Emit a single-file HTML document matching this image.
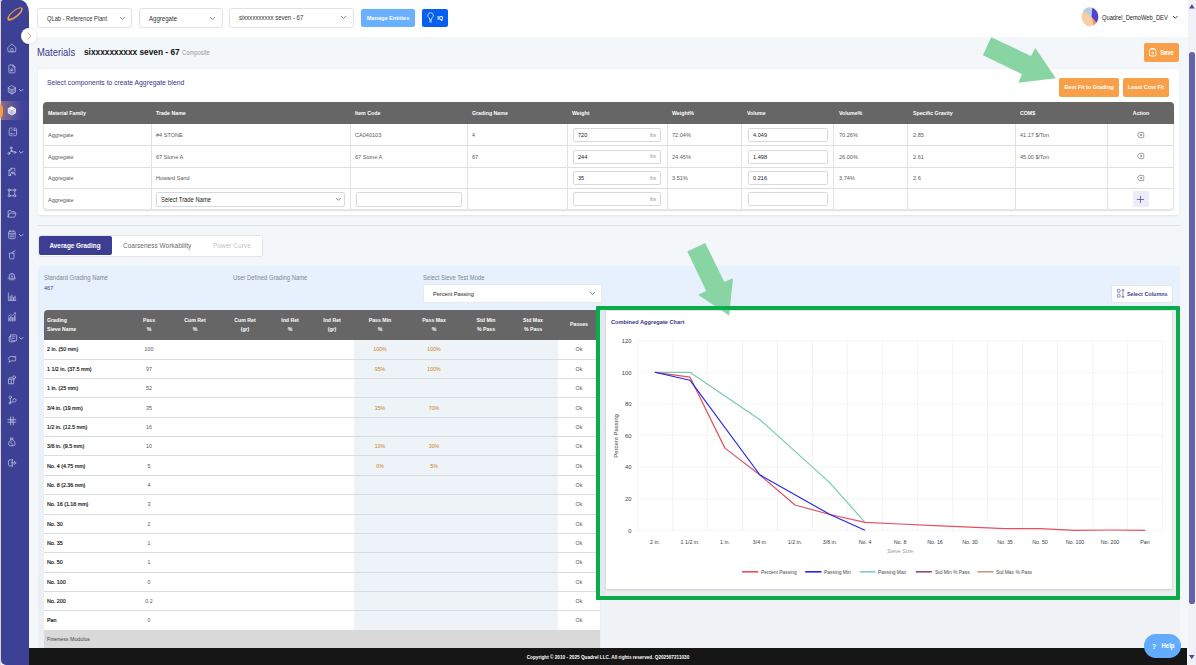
<!DOCTYPE html>
<html lang="en"><head><meta charset="utf-8"><title>Materials - Aggregate blend</title>
<style>
*{box-sizing:border-box;margin:0;padding:0}
html,body{width:1196px;height:665px;overflow:hidden}
body{position:relative;background:#f4f7fa;font-family:"Liberation Sans",sans-serif;color:#555;font-size:5.6px;line-height:1}
.abs{position:absolute}
.t{position:absolute;white-space:nowrap;line-height:1;transform:translateY(calc(-50% + 1px))}
.tc{position:absolute;white-space:nowrap;line-height:1;transform:translate(-50%,calc(-50% + 1px));text-align:center}
.b{font-weight:bold}
.sidebar{position:absolute;left:1px;top:0;width:27.5px;height:665px;background:#3d4196;border-radius:2px 9px 0 5px/2px 13px 0 5px}
.topbar{position:absolute;left:28.5px;top:0;width:1159.5px;height:37px;background:#fff}
.sel{position:absolute;background:#fff;border:0.7px solid #dfe2e7;border-radius:2.5px}
.btn{position:absolute;border-radius:2px;color:#fff;font-weight:bold}
.card{position:absolute;background:#fff;border-radius:2px;box-shadow:0 0.5px 2px rgba(60,70,90,.10)}
.th{position:absolute;background:#666;}
.hl{position:absolute;height:0.7px;background:#dcdfe4}
.vl{position:absolute;width:0.7px;background:#e0e3e8}
.inp{position:absolute;background:#fff;border:0.7px solid #d6dae0;border-radius:2px}
svg{position:absolute;overflow:visible}
</style></head>
<body>
<div class="topbar"></div>
<div class="sel" style="left:36.8px;top:8px;width:95.7px;height:19.5px"></div>
<div class="t" style="left:46.9px;top:17.7px;font-size:6.3px;color:#333;transform-origin:0 50%;transform:translateY(calc(-50% + 1px)) scaleX(0.9091);">QLab - Reference Plant</div>
<svg style="left:119.5px;top:16.65px" width="5.0" height="3.5" viewBox="0 0 5.0 3.5"><path d="M0.3 0.3 L2.5 2.5 L4.7 0.3" fill="none" stroke="#7c7c98" stroke-width="0.85" stroke-linecap="round" stroke-linejoin="round"/></svg>
<div class="sel" style="left:139px;top:8px;width:83.5px;height:19.5px"></div>
<div class="t" style="left:148.7px;top:17.7px;font-size:6.7px;color:#333;transform-origin:0 50%;transform:translateY(calc(-50% + 1px)) scaleX(0.9091);">Aggregate</div>
<svg style="left:209.7px;top:16.65px" width="5.0" height="3.5" viewBox="0 0 5.0 3.5"><path d="M0.3 0.3 L2.5 2.5 L4.7 0.3" fill="none" stroke="#7c7c98" stroke-width="0.85" stroke-linecap="round" stroke-linejoin="round"/></svg>
<div class="sel" style="left:229px;top:8px;width:124.5px;height:19.5px"></div>
<div class="t" style="left:239.2px;top:16.8px;font-size:6.63px;color:#333;transform-origin:0 50%;transform:translateY(calc(-50% + 1px)) scaleX(0.9091);">sixxxxxxxxxx seven - 67</div>
<svg style="left:341.3px;top:16.45px" width="5.0" height="3.5" viewBox="0 0 5.0 3.5"><path d="M0.3 0.3 L2.5 2.5 L4.7 0.3" fill="none" stroke="#7c7c98" stroke-width="0.85" stroke-linecap="round" stroke-linejoin="round"/></svg>
<div class="btn" style="left:360.9px;top:8.5px;width:53.8px;height:18.6px;background:#6ab0fe"></div>
<div class="tc b" style="left:388px;top:17.4px;font-size:6.16px;color:#fff;transform:translate(-50%,calc(-50% + 1px)) scaleX(0.9091);">Manage Entities</div>
<div class="btn" style="left:421.5px;top:8.5px;width:26.7px;height:18.6px;background:#0560f0"></div>
<svg style="left:426.8px;top:12.2px" width="7.2" height="11" viewBox="0 0 6 9.2"><path d="M3 0.6a2.3 2.3 0 0 0-1.3 4.2c.3.3.5.7.5 1.1v.5h1.6v-.5c0-.4.2-.8.5-1.1A2.3 2.3 0 0 0 3 .6z" fill="none" stroke="#fff" stroke-width="0.6"/><path d="M2.2 7.4h1.6M2.4 8.4h1.2" stroke="#fff" stroke-width="0.6" stroke-linecap="round"/></svg>
<div class="tc b" style="left:439.6px;top:18.2px;font-size:5.94px;color:#fff;transform:translate(-50%,calc(-50% + 1px)) scaleX(0.9091);">IQ</div>
<svg style="left:1080.6px;top:7.4px" width="17.8" height="19.6" viewBox="-8.9 -8.75 17.8 17.5" preserveAspectRatio="none"><circle r="8.4" fill="#f8cfa4"/><path d="M1.60 0.00L-6.80 -4.94A8.4 8.4 0 0 1 2.46 -8.03Z" fill="#b4cfe5"/><path d="M1.60 0.00L2.46 -8.03A8.4 8.4 0 0 1 6.43 5.40Z" fill="#4f44d2"/><path d="M1.60 0.00L6.43 5.40A8.4 8.4 0 0 1 3.81 7.48Z" fill="#f58c6c"/></svg>
<div class="t" style="left:1102.2px;top:16.7px;font-size:6.34px;color:#222;transform-origin:0 50%;transform:translateY(calc(-50% + 1px)) scaleX(0.9091);">Quadrel_DemoWeb_DEV</div>
<svg style="left:1173.3px;top:16.150000000000002px" width="4.6" height="3.3" viewBox="0 0 4.6 3.3"><path d="M0.3 0.3 L2.3 2.3 L4.3 0.3" fill="none" stroke="#333" stroke-width="0.9" stroke-linecap="round" stroke-linejoin="round"/></svg>
<div class="t" style="left:37.4px;top:50.8px;font-size:10.72px;color:#38388e;transform-origin:0 50%;transform:translateY(calc(-50% + 1px)) scaleX(0.8772);">Materials</div>
<div class="t b" style="left:83.8px;top:50.6px;font-size:8.57px;color:#111;transform-origin:0 50%;transform:translateY(calc(-50% + 1px)) scaleX(0.9709);">sixxxxxxxxxx seven - 67</div>
<div class="t" style="left:181.8px;top:51.6px;font-size:6.42px;color:#999;transform-origin:0 50%;transform:translateY(calc(-50% + 1px)) scaleX(0.9091);">Composite</div>
<div class="btn" style="left:1143.8px;top:42.7px;width:35.6px;height:19.6px;background:#f79f49"></div>
<svg style="left:1149.2px;top:48.3px" width="7.5" height="8.5" viewBox="0 0 7.5 8.5"><rect x="0.5" y="1.2" width="6.5" height="6.8" rx="1.3" fill="none" stroke="#fff" stroke-width="0.9"/><path d="M2.2 1.2v-0.7h3.1v0.7" fill="none" stroke="#fff" stroke-width="0.9"/><circle cx="3.75" cy="5" r="0.9" fill="none" stroke="#fff" stroke-width="0.8"/></svg>
<div class="tc b" style="left:1166.5px;top:51.5px;font-size:6.38px;color:#fff;transform:translate(-50%,calc(-50% + 1px)) scaleX(0.9091);">Save</div>
<div class="card" style="left:37.5px;top:69px;width:1141.5px;height:145.6px"></div>
<div class="t" style="left:47.3px;top:81.5px;font-size:7.47px;color:#38388e;transform-origin:0 50%;transform:translateY(calc(-50% + 1px)) scaleX(0.9091);">Select components to create Aggregate blend</div>
<div class="btn" style="left:1059.2px;top:77.8px;width:59.4px;height:19.2px;background:#f79f49"></div>
<div class="tc b" style="left:1088.9px;top:86.4px;font-size:6.01px;color:#fff;transform:translate(-50%,calc(-50% + 1px)) scaleX(0.9091);">Best Fit to Grading</div>
<div class="btn" style="left:1123.1px;top:77.8px;width:46.2px;height:19.2px;background:#f79f49"></div>
<div class="tc b" style="left:1146.2px;top:86.4px;font-size:6.05px;color:#fff;transform:translate(-50%,calc(-50% + 1px)) scaleX(0.9091);">Least Cost Fit</div>
<div class="abs" style="left:42.8px;top:102px;width:1130.9px;height:108.1px;border:0.7px solid #e4e6ea;border-radius:4px;background:#fff;box-shadow:0 1px 1.5px rgba(0,0,0,.13)"></div>
<div class="th" style="left:42.8px;top:102px;width:1130.9px;height:22.4px;border-radius:4px 4px 0 0"></div>
<div class="t b" style="left:47.8px;top:113.3px;font-size:5.78px;color:#fff;transform-origin:0 50%;transform:translateY(calc(-50% + 1px)) scaleX(0.9091);">Material Family</div>
<div class="t b" style="left:155.9px;top:113.3px;font-size:5.78px;color:#fff;transform-origin:0 50%;transform:translateY(calc(-50% + 1px)) scaleX(0.9091);">Trade Name</div>
<div class="t b" style="left:355.4px;top:113.3px;font-size:5.78px;color:#fff;transform-origin:0 50%;transform:translateY(calc(-50% + 1px)) scaleX(0.9091);">Item Code</div>
<div class="t b" style="left:472px;top:113.3px;font-size:5.78px;color:#fff;transform-origin:0 50%;transform:translateY(calc(-50% + 1px)) scaleX(0.9091);">Grading Name</div>
<div class="t b" style="left:572.3px;top:113.3px;font-size:5.78px;color:#fff;transform-origin:0 50%;transform:translateY(calc(-50% + 1px)) scaleX(0.9091);">Weight</div>
<div class="t b" style="left:671.9px;top:113.3px;font-size:5.78px;color:#fff;transform-origin:0 50%;transform:translateY(calc(-50% + 1px)) scaleX(0.9091);">Weight%</div>
<div class="t b" style="left:746.7px;top:113.3px;font-size:5.78px;color:#fff;transform-origin:0 50%;transform:translateY(calc(-50% + 1px)) scaleX(0.9091);">Volume</div>
<div class="t b" style="left:838.5px;top:113.3px;font-size:5.78px;color:#fff;transform-origin:0 50%;transform:translateY(calc(-50% + 1px)) scaleX(0.9091);">Volume%</div>
<div class="t b" style="left:912.5px;top:113.3px;font-size:5.78px;color:#fff;transform-origin:0 50%;transform:translateY(calc(-50% + 1px)) scaleX(0.9091);">Specific Gravity</div>
<div class="t b" style="left:1020.4px;top:113.3px;font-size:5.78px;color:#fff;transform-origin:0 50%;transform:translateY(calc(-50% + 1px)) scaleX(0.9091);">COM$</div>
<div class="tc b" style="left:1140.5500000000002px;top:113.3px;font-size:5.78px;color:#fff;transform:translate(-50%,calc(-50% + 1px)) scaleX(0.9091);">Action</div>
<div class="hl" style="left:43.5px;top:145.15px;width:1129.7px"></div>
<div class="hl" style="left:43.5px;top:167.05px;width:1129.7px"></div>
<div class="hl" style="left:43.5px;top:187.95000000000002px;width:1129.7px"></div>
<div class="vl" style="left:150.55px;top:124.4px;height:85.19999999999999px"></div>
<div class="vl" style="left:350.04999999999995px;top:124.4px;height:85.19999999999999px"></div>
<div class="vl" style="left:466.65px;top:124.4px;height:85.19999999999999px"></div>
<div class="vl" style="left:566.9499999999999px;top:124.4px;height:85.19999999999999px"></div>
<div class="vl" style="left:666.55px;top:124.4px;height:85.19999999999999px"></div>
<div class="vl" style="left:741.35px;top:124.4px;height:85.19999999999999px"></div>
<div class="vl" style="left:833.15px;top:124.4px;height:85.19999999999999px"></div>
<div class="vl" style="left:907.15px;top:124.4px;height:85.19999999999999px"></div>
<div class="vl" style="left:1015.05px;top:124.4px;height:85.19999999999999px"></div>
<div class="vl" style="left:1107.0500000000002px;top:124.4px;height:85.19999999999999px"></div>
<div class="t" style="left:47.8px;top:134.35px;font-size:6.11px;color:#5a5a5a;transform-origin:0 50%;transform:translateY(calc(-50% + 1px)) scaleX(0.9091);">Aggregate</div>
<div class="t" style="left:155.9px;top:134.35px;font-size:6.11px;color:#5a5a5a;transform-origin:0 50%;transform:translateY(calc(-50% + 1px)) scaleX(0.9091);">#4 STONE</div>
<div class="t" style="left:355.4px;top:134.35px;font-size:6.11px;color:#5a5a5a;transform-origin:0 50%;transform:translateY(calc(-50% + 1px)) scaleX(0.9091);">CA040103</div>
<div class="t" style="left:472px;top:134.35px;font-size:6.11px;color:#5a5a5a;transform-origin:0 50%;transform:translateY(calc(-50% + 1px)) scaleX(0.9091);">4</div>
<div class="inp" style="left:572.9px;top:127.94999999999999px;width:88.40000000000002px;height:14.2px"></div>
<div class="t" style="left:578.4px;top:134.45px;font-size:6.16px;color:#222;transform-origin:0 50%;transform:translateY(calc(-50% + 1px)) scaleX(0.9091);">720</div>
<div class="t" style="left:650.3px;top:134.65px;font-size:5.28px;color:#999;transform-origin:0 50%;transform:translateY(calc(-50% + 1px)) scaleX(0.9091);">lbs</div>
<div class="t" style="left:671.9px;top:134.35px;font-size:6.11px;color:#5a5a5a;transform-origin:0 50%;transform:translateY(calc(-50% + 1px)) scaleX(0.9091);">72.04%</div>
<div class="inp" style="left:747.5px;top:127.94999999999999px;width:80.69999999999996px;height:14.2px"></div>
<div class="t" style="left:753.0px;top:134.45px;font-size:6.16px;color:#222;transform-origin:0 50%;transform:translateY(calc(-50% + 1px)) scaleX(0.9091);">4.049</div>
<div class="t" style="left:838.5px;top:134.35px;font-size:6.11px;color:#5a5a5a;transform-origin:0 50%;transform:translateY(calc(-50% + 1px)) scaleX(0.9091);">70.26%</div>
<div class="t" style="left:912.5px;top:134.35px;font-size:6.11px;color:#5a5a5a;transform-origin:0 50%;transform:translateY(calc(-50% + 1px)) scaleX(0.9091);">2.85</div>
<div class="t" style="left:1020.4px;top:134.35px;font-size:6.11px;color:#5a5a5a;transform-origin:0 50%;transform:translateY(calc(-50% + 1px)) scaleX(0.9091);">41.17 $/Ton</div>
<svg style="left:1136.9500000000003px;top:131.85px" width="7.2" height="6" viewBox="0 0 7.2 6"><path d="M2.2 0.4h3.6a1 1 0 0 1 1 1v3.2a1 1 0 0 1-1 1H2.2L0.4 3z" fill="none" stroke="#555" stroke-width="0.55" stroke-linejoin="round"/><path d="M3.3 2.1l1.7 1.8M5 2.1L3.3 3.9" stroke="#555" stroke-width="0.55" stroke-linecap="round"/></svg>
<div class="t" style="left:47.8px;top:155.95px;font-size:6.11px;color:#5a5a5a;transform-origin:0 50%;transform:translateY(calc(-50% + 1px)) scaleX(0.9091);">Aggregate</div>
<div class="t" style="left:155.9px;top:155.95px;font-size:6.11px;color:#5a5a5a;transform-origin:0 50%;transform:translateY(calc(-50% + 1px)) scaleX(0.9091);">67 Stone A</div>
<div class="t" style="left:355.4px;top:155.95px;font-size:6.11px;color:#5a5a5a;transform-origin:0 50%;transform:translateY(calc(-50% + 1px)) scaleX(0.9091);">67 Stone A</div>
<div class="t" style="left:472px;top:155.95px;font-size:6.11px;color:#5a5a5a;transform-origin:0 50%;transform:translateY(calc(-50% + 1px)) scaleX(0.9091);">67</div>
<div class="inp" style="left:572.9px;top:149.54999999999998px;width:88.40000000000002px;height:14.2px"></div>
<div class="t" style="left:578.4px;top:156.04999999999998px;font-size:6.16px;color:#222;transform-origin:0 50%;transform:translateY(calc(-50% + 1px)) scaleX(0.9091);">244</div>
<div class="t" style="left:650.3px;top:156.25px;font-size:5.28px;color:#999;transform-origin:0 50%;transform:translateY(calc(-50% + 1px)) scaleX(0.9091);">lbs</div>
<div class="t" style="left:671.9px;top:155.95px;font-size:6.11px;color:#5a5a5a;transform-origin:0 50%;transform:translateY(calc(-50% + 1px)) scaleX(0.9091);">24.45%</div>
<div class="inp" style="left:747.5px;top:149.54999999999998px;width:80.69999999999996px;height:14.2px"></div>
<div class="t" style="left:753.0px;top:156.04999999999998px;font-size:6.16px;color:#222;transform-origin:0 50%;transform:translateY(calc(-50% + 1px)) scaleX(0.9091);">1.498</div>
<div class="t" style="left:838.5px;top:155.95px;font-size:6.11px;color:#5a5a5a;transform-origin:0 50%;transform:translateY(calc(-50% + 1px)) scaleX(0.9091);">26.00%</div>
<div class="t" style="left:912.5px;top:155.95px;font-size:6.11px;color:#5a5a5a;transform-origin:0 50%;transform:translateY(calc(-50% + 1px)) scaleX(0.9091);">2.61</div>
<div class="t" style="left:1020.4px;top:155.95px;font-size:6.11px;color:#5a5a5a;transform-origin:0 50%;transform:translateY(calc(-50% + 1px)) scaleX(0.9091);">45.00 $/Ton</div>
<svg style="left:1136.9500000000003px;top:153.45px" width="7.2" height="6" viewBox="0 0 7.2 6"><path d="M2.2 0.4h3.6a1 1 0 0 1 1 1v3.2a1 1 0 0 1-1 1H2.2L0.4 3z" fill="none" stroke="#555" stroke-width="0.55" stroke-linejoin="round"/><path d="M3.3 2.1l1.7 1.8M5 2.1L3.3 3.9" stroke="#555" stroke-width="0.55" stroke-linecap="round"/></svg>
<div class="t" style="left:47.8px;top:177.35000000000002px;font-size:6.11px;color:#5a5a5a;transform-origin:0 50%;transform:translateY(calc(-50% + 1px)) scaleX(0.9091);">Aggregate</div>
<div class="t" style="left:155.9px;top:177.35000000000002px;font-size:6.11px;color:#5a5a5a;transform-origin:0 50%;transform:translateY(calc(-50% + 1px)) scaleX(0.9091);">Howard Sand</div>
<div class="inp" style="left:572.9px;top:170.95000000000002px;width:88.40000000000002px;height:14.2px"></div>
<div class="t" style="left:578.4px;top:177.45000000000002px;font-size:6.16px;color:#222;transform-origin:0 50%;transform:translateY(calc(-50% + 1px)) scaleX(0.9091);">35</div>
<div class="t" style="left:650.3px;top:177.65000000000003px;font-size:5.28px;color:#999;transform-origin:0 50%;transform:translateY(calc(-50% + 1px)) scaleX(0.9091);">lbs</div>
<div class="t" style="left:671.9px;top:177.35000000000002px;font-size:6.11px;color:#5a5a5a;transform-origin:0 50%;transform:translateY(calc(-50% + 1px)) scaleX(0.9091);">3.51%</div>
<div class="inp" style="left:747.5px;top:170.95000000000002px;width:80.69999999999996px;height:14.2px"></div>
<div class="t" style="left:753.0px;top:177.45000000000002px;font-size:6.16px;color:#222;transform-origin:0 50%;transform:translateY(calc(-50% + 1px)) scaleX(0.9091);">0.216</div>
<div class="t" style="left:838.5px;top:177.35000000000002px;font-size:6.11px;color:#5a5a5a;transform-origin:0 50%;transform:translateY(calc(-50% + 1px)) scaleX(0.9091);">3.74%</div>
<div class="t" style="left:912.5px;top:177.35000000000002px;font-size:6.11px;color:#5a5a5a;transform-origin:0 50%;transform:translateY(calc(-50% + 1px)) scaleX(0.9091);">2.6</div>
<svg style="left:1136.9500000000003px;top:174.85000000000002px" width="7.2" height="6" viewBox="0 0 7.2 6"><path d="M2.2 0.4h3.6a1 1 0 0 1 1 1v3.2a1 1 0 0 1-1 1H2.2L0.4 3z" fill="none" stroke="#555" stroke-width="0.55" stroke-linejoin="round"/><path d="M3.3 2.1l1.7 1.8M5 2.1L3.3 3.9" stroke="#555" stroke-width="0.55" stroke-linecap="round"/></svg>
<div class="t" style="left:47.8px;top:198.7px;font-size:6.11px;color:#5a5a5a;transform-origin:0 50%;transform:translateY(calc(-50% + 1px)) scaleX(0.9091);">Aggregate</div>
<div class="inp" style="left:572.9px;top:192.29999999999998px;width:88.40000000000002px;height:14.2px"></div>
<div class="t" style="left:650.3px;top:199.0px;font-size:5.28px;color:#999;transform-origin:0 50%;transform:translateY(calc(-50% + 1px)) scaleX(0.9091);">lbs</div>
<div class="inp" style="left:747.5px;top:192.29999999999998px;width:80.69999999999996px;height:14.2px"></div>
<div class="abs" style="left:1132.5500000000002px;top:191.0px;width:16px;height:16.4px;background:#ecebf8;border-radius:1.5px"></div>
<svg style="left:1137.0500000000002px;top:195.7px" width="7" height="7" viewBox="0 0 7 7"><path d="M3.5 0.3v6.4M0.3 3.5h6.4" stroke="#3d3d94" stroke-width="0.7" stroke-linecap="round"/></svg>
<div class="inp" style="left:156px;top:191.7px;width:188.8px;height:15px"></div>
<div class="t" style="left:160.6px;top:199.0px;font-size:6.44px;color:#222;transform-origin:0 50%;transform:translateY(calc(-50% + 1px)) scaleX(0.9091);">Select Trade Name</div>
<svg style="left:335.7px;top:198.24999999999997px" width="4.6" height="3.3" viewBox="0 0 4.6 3.3"><path d="M0.3 0.3 L2.3 2.3 L4.3 0.3" fill="none" stroke="#666" stroke-width="0.8" stroke-linecap="round" stroke-linejoin="round"/></svg>
<div class="inp" style="left:356px;top:191.7px;width:105.8px;height:15px"></div>
<div class="abs" style="left:37.5px;top:225px;width:1142px;height:0.7px;background:#dfe3e8"></div>
<div class="abs" style="left:37.7px;top:234.8px;width:225.5px;height:22px;background:#fff;border:0.7px solid #e1e4e9;border-radius:2.5px"></div>
<div class="abs" style="left:39.1px;top:236.4px;width:72.6px;height:18.4px;background:#3d3d94;border-radius:2px"></div>
<div class="tc b" style="left:75.4px;top:244.7px;font-size:7.02px;color:#fff;transform:translate(-50%,calc(-50% + 1px)) scaleX(0.9091);">Average Grading</div>
<div class="t" style="left:122.7px;top:245.9px;font-size:7.16px;color:#6a6a6a;transform-origin:0 50%;transform:translateY(calc(-50% + 1px)) scaleX(0.9091);">Coarseness Workability</div>
<div class="t" style="left:213px;top:244.7px;font-size:7.19px;color:#c4c4c8;transform-origin:0 50%;transform:translateY(calc(-50% + 1px)) scaleX(0.9091);">Power Curve</div>
<div class="abs" style="left:37.5px;top:265.8px;width:1142px;height:400px;background:#e7f1fd;border-radius:3px 3px 0 0"></div>
<div class="t" style="left:43.8px;top:277.2px;font-size:6.49px;color:#80858e;transform-origin:0 50%;transform:translateY(calc(-50% + 1px)) scaleX(0.9091);">Standard Grading Name</div>
<div class="t" style="left:43.8px;top:287.4px;font-size:6.16px;color:#3d3d94;transform-origin:0 50%;transform:translateY(calc(-50% + 1px)) scaleX(0.9091);">467</div>
<div class="t" style="left:233.1px;top:277.2px;font-size:6.49px;color:#80858e;transform-origin:0 50%;transform:translateY(calc(-50% + 1px)) scaleX(0.9091);">User Defined Grading Name</div>
<div class="t" style="left:423.4px;top:277.2px;font-size:6.49px;color:#80858e;transform-origin:0 50%;transform:translateY(calc(-50% + 1px)) scaleX(0.9091);">Select Sieve Test Mode</div>
<div class="sel" style="left:423.4px;top:284.3px;width:178.9px;height:18.4px;border-color:#e6e9ee"></div>
<div class="t" style="left:432.8px;top:292.8px;font-size:6.16px;color:#222;transform-origin:0 50%;transform:translateY(calc(-50% + 1px)) scaleX(0.9091);">Percent Passing</div>
<svg style="left:590.1px;top:292.35px" width="5.0" height="3.5" viewBox="0 0 5.0 3.5"><path d="M0.3 0.3 L2.5 2.5 L4.7 0.3" fill="none" stroke="#77779a" stroke-width="0.9" stroke-linecap="round" stroke-linejoin="round"/></svg>
<div class="abs" style="left:1111.4px;top:284.7px;width:61.4px;height:18.1px;background:#fff;border:0.7px solid #e3e6ee;border-radius:2px"></div>
<svg style="left:1116.5px;top:289.3px" width="8" height="9" viewBox="0 0 8 9"><rect x="0.4" y="0.4" width="2.6" height="3" rx="0.8" fill="none" stroke="#3d3d94" stroke-width="0.6"/><rect x="0.4" y="5.2" width="2.6" height="3" rx="0.8" fill="none" stroke="#3d3d94" stroke-width="0.6"/><path d="M6 0.6v7.8M4.8 1.8L6 0.5l1.2 1.3M4.8 7.2L6 8.5l1.2-1.3" fill="none" stroke="#3d3d94" stroke-width="0.6" stroke-linecap="round" stroke-linejoin="round"/></svg>
<div class="t b" style="left:1127px;top:293.9px;font-size:5.94px;color:#3d3d94;transform-origin:0 50%;transform:translateY(calc(-50% + 1px)) scaleX(0.9091);">Select Columns</div>
<div class="abs" style="left:37.5px;top:330px;width:6.3px;height:318px;background:linear-gradient(#e7f1fd,#edf0f4 70%,#eceef1)"></div>
<div class="abs" style="left:43.8px;top:339.7px;width:556.7px;height:290.25px;background:#fff"></div>
<div class="abs" style="left:354.2px;top:339.7px;width:203.7px;height:290.25px;background:#eef3f7"></div>
<div class="th" style="left:43.8px;top:310.3px;width:556.7px;height:29.399999999999977px;border-radius:4px 0 0 0"></div>
<div class="t b" style="left:46.5px;top:320px;font-size:5.72px;color:#fff;transform-origin:0 50%;transform:translateY(calc(-50% + 1px)) scaleX(0.9091);">Grading</div>
<div class="t b" style="left:46.5px;top:329px;font-size:5.72px;color:#fff;transform-origin:0 50%;transform:translateY(calc(-50% + 1px)) scaleX(0.9091);">Sieve Name</div>
<div class="tc b" style="left:149.2px;top:320px;font-size:5.72px;color:#fff;transform:translate(-50%,calc(-50% + 1px)) scaleX(0.9091);">Pass</div>
<div class="tc b" style="left:149.2px;top:329px;font-size:5.72px;color:#fff;transform:translate(-50%,calc(-50% + 1px)) scaleX(0.9091);">%</div>
<div class="tc b" style="left:195px;top:320px;font-size:5.72px;color:#fff;transform:translate(-50%,calc(-50% + 1px)) scaleX(0.9091);">Cum Ret</div>
<div class="tc b" style="left:195px;top:329px;font-size:5.72px;color:#fff;transform:translate(-50%,calc(-50% + 1px)) scaleX(0.9091);">%</div>
<div class="tc b" style="left:244.5px;top:320px;font-size:5.72px;color:#fff;transform:translate(-50%,calc(-50% + 1px)) scaleX(0.9091);">Cum Ret</div>
<div class="tc b" style="left:244.5px;top:329px;font-size:5.72px;color:#fff;transform:translate(-50%,calc(-50% + 1px)) scaleX(0.9091);">(gr)</div>
<div class="tc b" style="left:290px;top:320px;font-size:5.72px;color:#fff;transform:translate(-50%,calc(-50% + 1px)) scaleX(0.9091);">Ind Ret</div>
<div class="tc b" style="left:290px;top:329px;font-size:5.72px;color:#fff;transform:translate(-50%,calc(-50% + 1px)) scaleX(0.9091);">%</div>
<div class="tc b" style="left:332.3px;top:320px;font-size:5.72px;color:#fff;transform:translate(-50%,calc(-50% + 1px)) scaleX(0.9091);">Ind Ret</div>
<div class="tc b" style="left:332.3px;top:329px;font-size:5.72px;color:#fff;transform:translate(-50%,calc(-50% + 1px)) scaleX(0.9091);">(gr)</div>
<div class="tc b" style="left:380.3px;top:320px;font-size:5.72px;color:#fff;transform:translate(-50%,calc(-50% + 1px)) scaleX(0.9091);">Pass Min</div>
<div class="tc b" style="left:380.3px;top:329px;font-size:5.72px;color:#fff;transform:translate(-50%,calc(-50% + 1px)) scaleX(0.9091);">%</div>
<div class="tc b" style="left:434.4px;top:320px;font-size:5.72px;color:#fff;transform:translate(-50%,calc(-50% + 1px)) scaleX(0.9091);">Pass Max</div>
<div class="tc b" style="left:434.4px;top:329px;font-size:5.72px;color:#fff;transform:translate(-50%,calc(-50% + 1px)) scaleX(0.9091);">%</div>
<div class="tc b" style="left:486.3px;top:320px;font-size:5.72px;color:#fff;transform:translate(-50%,calc(-50% + 1px)) scaleX(0.9091);">Std Min</div>
<div class="tc b" style="left:486.3px;top:329px;font-size:5.72px;color:#fff;transform:translate(-50%,calc(-50% + 1px)) scaleX(0.9091);">% Pass</div>
<div class="tc b" style="left:533.1px;top:320px;font-size:5.72px;color:#fff;transform:translate(-50%,calc(-50% + 1px)) scaleX(0.9091);">Std Max</div>
<div class="tc b" style="left:533.1px;top:329px;font-size:5.72px;color:#fff;transform:translate(-50%,calc(-50% + 1px)) scaleX(0.9091);">% Pass</div>
<div class="tc b" style="left:578.9px;top:324.0px;font-size:5.72px;color:#fff;transform:translate(-50%,calc(-50% + 1px)) scaleX(0.9091);">Passes</div>
<div class="t" style="left:46.5px;top:349.475px;font-size:5.85px;color:#1c1c1c;transform-origin:0 50%;transform:translateY(calc(-50% + 1px)) scaleX(0.9091);-webkit-text-stroke:0.2px #1c1c1c;">2 in. (50 mm)</div>
<div class="tc" style="left:149.2px;top:349.475px;font-size:5.83px;color:#555;transform:translate(-50%,calc(-50% + 1px)) scaleX(0.9091);">100</div>
<div class="tc" style="left:380.3px;top:349.475px;font-size:5.72px;color:#cc7f22;transform:translate(-50%,calc(-50% + 1px)) scaleX(0.9091);">100%</div>
<div class="tc" style="left:434.4px;top:349.475px;font-size:5.72px;color:#cc7f22;transform:translate(-50%,calc(-50% + 1px)) scaleX(0.9091);">100%</div>
<div class="tc" style="left:578.9px;top:349.475px;font-size:5.83px;color:#555;transform:translate(-50%,calc(-50% + 1px)) scaleX(0.9091);">Ok</div>
<div class="hl" style="left:43.8px;top:358.7px;width:556.7px;background:#d9dde3"></div>
<div class="t" style="left:46.5px;top:368.82500000000005px;font-size:5.85px;color:#1c1c1c;transform-origin:0 50%;transform:translateY(calc(-50% + 1px)) scaleX(0.9091);-webkit-text-stroke:0.2px #1c1c1c;">1 1/2 in. (37.5 mm)</div>
<div class="tc" style="left:149.2px;top:368.82500000000005px;font-size:5.83px;color:#555;transform:translate(-50%,calc(-50% + 1px)) scaleX(0.9091);">97</div>
<div class="tc" style="left:380.3px;top:368.82500000000005px;font-size:5.72px;color:#cc7f22;transform:translate(-50%,calc(-50% + 1px)) scaleX(0.9091);">95%</div>
<div class="tc" style="left:434.4px;top:368.82500000000005px;font-size:5.72px;color:#cc7f22;transform:translate(-50%,calc(-50% + 1px)) scaleX(0.9091);">100%</div>
<div class="tc" style="left:578.9px;top:368.82500000000005px;font-size:5.83px;color:#555;transform:translate(-50%,calc(-50% + 1px)) scaleX(0.9091);">Ok</div>
<div class="hl" style="left:43.8px;top:378.04999999999995px;width:556.7px;background:#d9dde3"></div>
<div class="t" style="left:46.5px;top:388.175px;font-size:5.85px;color:#1c1c1c;transform-origin:0 50%;transform:translateY(calc(-50% + 1px)) scaleX(0.9091);-webkit-text-stroke:0.2px #1c1c1c;">1 in. (25 mm)</div>
<div class="tc" style="left:149.2px;top:388.175px;font-size:5.83px;color:#555;transform:translate(-50%,calc(-50% + 1px)) scaleX(0.9091);">52</div>
<div class="tc" style="left:578.9px;top:388.175px;font-size:5.83px;color:#555;transform:translate(-50%,calc(-50% + 1px)) scaleX(0.9091);">Ok</div>
<div class="hl" style="left:43.8px;top:397.4px;width:556.7px;background:#d9dde3"></div>
<div class="t" style="left:46.5px;top:407.52500000000003px;font-size:5.85px;color:#1c1c1c;transform-origin:0 50%;transform:translateY(calc(-50% + 1px)) scaleX(0.9091);-webkit-text-stroke:0.2px #1c1c1c;">3/4 in. (19 mm)</div>
<div class="tc" style="left:149.2px;top:407.52500000000003px;font-size:5.83px;color:#555;transform:translate(-50%,calc(-50% + 1px)) scaleX(0.9091);">35</div>
<div class="tc" style="left:380.3px;top:407.52500000000003px;font-size:5.72px;color:#cc7f22;transform:translate(-50%,calc(-50% + 1px)) scaleX(0.9091);">35%</div>
<div class="tc" style="left:434.4px;top:407.52500000000003px;font-size:5.72px;color:#cc7f22;transform:translate(-50%,calc(-50% + 1px)) scaleX(0.9091);">70%</div>
<div class="tc" style="left:578.9px;top:407.52500000000003px;font-size:5.83px;color:#555;transform:translate(-50%,calc(-50% + 1px)) scaleX(0.9091);">Ok</div>
<div class="hl" style="left:43.8px;top:416.75px;width:556.7px;background:#d9dde3"></div>
<div class="t" style="left:46.5px;top:426.87500000000006px;font-size:5.85px;color:#1c1c1c;transform-origin:0 50%;transform:translateY(calc(-50% + 1px)) scaleX(0.9091);-webkit-text-stroke:0.2px #1c1c1c;">1/2 in. (12.5 mm)</div>
<div class="tc" style="left:149.2px;top:426.87500000000006px;font-size:5.83px;color:#555;transform:translate(-50%,calc(-50% + 1px)) scaleX(0.9091);">16</div>
<div class="tc" style="left:578.9px;top:426.87500000000006px;font-size:5.83px;color:#555;transform:translate(-50%,calc(-50% + 1px)) scaleX(0.9091);">Ok</div>
<div class="hl" style="left:43.8px;top:436.09999999999997px;width:556.7px;background:#d9dde3"></div>
<div class="t" style="left:46.5px;top:446.225px;font-size:5.85px;color:#1c1c1c;transform-origin:0 50%;transform:translateY(calc(-50% + 1px)) scaleX(0.9091);-webkit-text-stroke:0.2px #1c1c1c;">3/8 in. (9.5 mm)</div>
<div class="tc" style="left:149.2px;top:446.225px;font-size:5.83px;color:#555;transform:translate(-50%,calc(-50% + 1px)) scaleX(0.9091);">10</div>
<div class="tc" style="left:380.3px;top:446.225px;font-size:5.72px;color:#cc7f22;transform:translate(-50%,calc(-50% + 1px)) scaleX(0.9091);">10%</div>
<div class="tc" style="left:434.4px;top:446.225px;font-size:5.72px;color:#cc7f22;transform:translate(-50%,calc(-50% + 1px)) scaleX(0.9091);">30%</div>
<div class="tc" style="left:578.9px;top:446.225px;font-size:5.83px;color:#555;transform:translate(-50%,calc(-50% + 1px)) scaleX(0.9091);">Ok</div>
<div class="hl" style="left:43.8px;top:455.45px;width:556.7px;background:#d9dde3"></div>
<div class="t" style="left:46.5px;top:465.57500000000005px;font-size:5.85px;color:#1c1c1c;transform-origin:0 50%;transform:translateY(calc(-50% + 1px)) scaleX(0.9091);-webkit-text-stroke:0.2px #1c1c1c;">No. 4 (4.75 mm)</div>
<div class="tc" style="left:149.2px;top:465.57500000000005px;font-size:5.83px;color:#555;transform:translate(-50%,calc(-50% + 1px)) scaleX(0.9091);">5</div>
<div class="tc" style="left:380.3px;top:465.57500000000005px;font-size:5.72px;color:#cc7f22;transform:translate(-50%,calc(-50% + 1px)) scaleX(0.9091);">0%</div>
<div class="tc" style="left:434.4px;top:465.57500000000005px;font-size:5.72px;color:#cc7f22;transform:translate(-50%,calc(-50% + 1px)) scaleX(0.9091);">5%</div>
<div class="tc" style="left:578.9px;top:465.57500000000005px;font-size:5.83px;color:#555;transform:translate(-50%,calc(-50% + 1px)) scaleX(0.9091);">Ok</div>
<div class="hl" style="left:43.8px;top:474.79999999999995px;width:556.7px;background:#d9dde3"></div>
<div class="t" style="left:46.5px;top:484.925px;font-size:5.85px;color:#1c1c1c;transform-origin:0 50%;transform:translateY(calc(-50% + 1px)) scaleX(0.9091);-webkit-text-stroke:0.2px #1c1c1c;">No. 8 (2.36 mm)</div>
<div class="tc" style="left:149.2px;top:484.925px;font-size:5.83px;color:#555;transform:translate(-50%,calc(-50% + 1px)) scaleX(0.9091);">4</div>
<div class="tc" style="left:578.9px;top:484.925px;font-size:5.83px;color:#555;transform:translate(-50%,calc(-50% + 1px)) scaleX(0.9091);">Ok</div>
<div class="hl" style="left:43.8px;top:494.15px;width:556.7px;background:#d9dde3"></div>
<div class="t" style="left:46.5px;top:504.27500000000003px;font-size:5.85px;color:#1c1c1c;transform-origin:0 50%;transform:translateY(calc(-50% + 1px)) scaleX(0.9091);-webkit-text-stroke:0.2px #1c1c1c;">No. 16 (1.18 mm)</div>
<div class="tc" style="left:149.2px;top:504.27500000000003px;font-size:5.83px;color:#555;transform:translate(-50%,calc(-50% + 1px)) scaleX(0.9091);">3</div>
<div class="tc" style="left:578.9px;top:504.27500000000003px;font-size:5.83px;color:#555;transform:translate(-50%,calc(-50% + 1px)) scaleX(0.9091);">Ok</div>
<div class="hl" style="left:43.8px;top:513.5px;width:556.7px;background:#d9dde3"></div>
<div class="t" style="left:46.5px;top:523.625px;font-size:5.85px;color:#1c1c1c;transform-origin:0 50%;transform:translateY(calc(-50% + 1px)) scaleX(0.9091);-webkit-text-stroke:0.2px #1c1c1c;">No. 30</div>
<div class="tc" style="left:149.2px;top:523.625px;font-size:5.83px;color:#555;transform:translate(-50%,calc(-50% + 1px)) scaleX(0.9091);">2</div>
<div class="tc" style="left:578.9px;top:523.625px;font-size:5.83px;color:#555;transform:translate(-50%,calc(-50% + 1px)) scaleX(0.9091);">Ok</div>
<div class="hl" style="left:43.8px;top:532.85px;width:556.7px;background:#d9dde3"></div>
<div class="t" style="left:46.5px;top:542.975px;font-size:5.85px;color:#1c1c1c;transform-origin:0 50%;transform:translateY(calc(-50% + 1px)) scaleX(0.9091);-webkit-text-stroke:0.2px #1c1c1c;">No. 35</div>
<div class="tc" style="left:149.2px;top:542.975px;font-size:5.83px;color:#555;transform:translate(-50%,calc(-50% + 1px)) scaleX(0.9091);">1</div>
<div class="tc" style="left:578.9px;top:542.975px;font-size:5.83px;color:#555;transform:translate(-50%,calc(-50% + 1px)) scaleX(0.9091);">Ok</div>
<div class="hl" style="left:43.8px;top:552.1999999999999px;width:556.7px;background:#d9dde3"></div>
<div class="t" style="left:46.5px;top:562.3249999999999px;font-size:5.85px;color:#1c1c1c;transform-origin:0 50%;transform:translateY(calc(-50% + 1px)) scaleX(0.9091);-webkit-text-stroke:0.2px #1c1c1c;">No. 50</div>
<div class="tc" style="left:149.2px;top:562.3249999999999px;font-size:5.83px;color:#555;transform:translate(-50%,calc(-50% + 1px)) scaleX(0.9091);">1</div>
<div class="tc" style="left:578.9px;top:562.3249999999999px;font-size:5.83px;color:#555;transform:translate(-50%,calc(-50% + 1px)) scaleX(0.9091);">Ok</div>
<div class="hl" style="left:43.8px;top:571.55px;width:556.7px;background:#d9dde3"></div>
<div class="t" style="left:46.5px;top:581.675px;font-size:5.85px;color:#1c1c1c;transform-origin:0 50%;transform:translateY(calc(-50% + 1px)) scaleX(0.9091);-webkit-text-stroke:0.2px #1c1c1c;">No. 100</div>
<div class="tc" style="left:149.2px;top:581.675px;font-size:5.83px;color:#555;transform:translate(-50%,calc(-50% + 1px)) scaleX(0.9091);">0</div>
<div class="tc" style="left:578.9px;top:581.675px;font-size:5.83px;color:#555;transform:translate(-50%,calc(-50% + 1px)) scaleX(0.9091);">Ok</div>
<div class="hl" style="left:43.8px;top:590.9px;width:556.7px;background:#d9dde3"></div>
<div class="t" style="left:46.5px;top:601.025px;font-size:5.85px;color:#1c1c1c;transform-origin:0 50%;transform:translateY(calc(-50% + 1px)) scaleX(0.9091);-webkit-text-stroke:0.2px #1c1c1c;">No. 200</div>
<div class="tc" style="left:149.2px;top:601.025px;font-size:5.83px;color:#555;transform:translate(-50%,calc(-50% + 1px)) scaleX(0.9091);">0.2</div>
<div class="tc" style="left:578.9px;top:601.025px;font-size:5.83px;color:#555;transform:translate(-50%,calc(-50% + 1px)) scaleX(0.9091);">Ok</div>
<div class="hl" style="left:43.8px;top:610.25px;width:556.7px;background:#d9dde3"></div>
<div class="t" style="left:46.5px;top:620.375px;font-size:5.85px;color:#1c1c1c;transform-origin:0 50%;transform:translateY(calc(-50% + 1px)) scaleX(0.9091);-webkit-text-stroke:0.2px #1c1c1c;">Pan</div>
<div class="tc" style="left:149.2px;top:620.375px;font-size:5.83px;color:#555;transform:translate(-50%,calc(-50% + 1px)) scaleX(0.9091);">0</div>
<div class="tc" style="left:578.9px;top:620.375px;font-size:5.83px;color:#555;transform:translate(-50%,calc(-50% + 1px)) scaleX(0.9091);">Ok</div>
<div class="abs" style="left:43.8px;top:629.95px;width:556.7px;height:20px;background:#d9d9d9"></div>
<div class="t" style="left:46.5px;top:638.95px;font-size:5.83px;color:#444;transform-origin:0 50%;transform:translateY(calc(-50% + 1px)) scaleX(0.9091);">Fineness Modulus</div>
<div class="abs" style="left:600.5px;top:310px;width:579.5px;height:340px;background:#f0f2f5"></div>
<div class="abs" style="left:600px;top:310px;width:576px;height:286px;background:#eceef2"></div>
<div class="abs" style="left:600px;top:310px;width:6px;height:286px;background:#e3e9f2"></div>
<div class="abs" style="left:605.6px;top:311px;width:566.3px;height:278px;background:#fff;border-radius:1.5px;box-shadow:0 0.5px 2.5px rgba(0,0,0,.16)"></div>
<div class="t b" style="left:611.1px;top:321.0px;font-size:6.22px;color:#35358a;transform-origin:0 50%;transform:translateY(calc(-50% + 1px)) scaleX(0.9091);">Combined Aggregate Chart</div>
<svg style="left:0;top:0" width="1196" height="665" viewBox="0 0 1196 665"><line x1="637.4" y1="530.30" x2="1162.59" y2="530.30" stroke="#ececec" stroke-width="0.6"/><line x1="637.4" y1="498.70" x2="1162.59" y2="498.70" stroke="#ececec" stroke-width="0.6"/><line x1="637.4" y1="467.10" x2="1162.59" y2="467.10" stroke="#ececec" stroke-width="0.6"/><line x1="637.4" y1="435.50" x2="1162.59" y2="435.50" stroke="#ececec" stroke-width="0.6"/><line x1="637.4" y1="403.90" x2="1162.59" y2="403.90" stroke="#ececec" stroke-width="0.6"/><line x1="637.4" y1="372.30" x2="1162.59" y2="372.30" stroke="#ececec" stroke-width="0.6"/><line x1="637.4" y1="340.70" x2="1162.59" y2="340.70" stroke="#ececec" stroke-width="0.6"/><line x1="637.40" y1="340.70" x2="637.40" y2="530.3" stroke="#ececec" stroke-width="0.6"/><line x1="672.41" y1="340.70" x2="672.41" y2="530.3" stroke="#ececec" stroke-width="0.6"/><line x1="707.43" y1="340.70" x2="707.43" y2="530.3" stroke="#ececec" stroke-width="0.6"/><line x1="742.44" y1="340.70" x2="742.44" y2="530.3" stroke="#ececec" stroke-width="0.6"/><line x1="777.45" y1="340.70" x2="777.45" y2="530.3" stroke="#ececec" stroke-width="0.6"/><line x1="812.46" y1="340.70" x2="812.46" y2="530.3" stroke="#ececec" stroke-width="0.6"/><line x1="847.48" y1="340.70" x2="847.48" y2="530.3" stroke="#ececec" stroke-width="0.6"/><line x1="882.49" y1="340.70" x2="882.49" y2="530.3" stroke="#ececec" stroke-width="0.6"/><line x1="917.50" y1="340.70" x2="917.50" y2="530.3" stroke="#ececec" stroke-width="0.6"/><line x1="952.52" y1="340.70" x2="952.52" y2="530.3" stroke="#ececec" stroke-width="0.6"/><line x1="987.53" y1="340.70" x2="987.53" y2="530.3" stroke="#ececec" stroke-width="0.6"/><line x1="1022.54" y1="340.70" x2="1022.54" y2="530.3" stroke="#ececec" stroke-width="0.6"/><line x1="1057.56" y1="340.70" x2="1057.56" y2="530.3" stroke="#ececec" stroke-width="0.6"/><line x1="1092.57" y1="340.70" x2="1092.57" y2="530.3" stroke="#ececec" stroke-width="0.6"/><line x1="1127.58" y1="340.70" x2="1127.58" y2="530.3" stroke="#ececec" stroke-width="0.6"/><line x1="1162.59" y1="340.70" x2="1162.59" y2="530.3" stroke="#ececec" stroke-width="0.6"/><polyline points="654.91,372.30 689.92,372.30 759.95,419.70 829.97,482.90 864.98,522.40" fill="none" stroke="#74cbb2" stroke-width="1.15" stroke-linejoin="round"/><polyline points="654.91,372.30 689.92,377.04 724.93,448.14 759.95,475.00 794.96,505.02 829.97,514.50 864.98,522.40 900.00,523.98 935.01,525.56 970.02,527.14 1005.04,528.72 1040.05,528.72 1075.06,530.30 1110.08,529.98 1145.09,530.30" fill="none" stroke="#e2515f" stroke-width="1.2" stroke-linejoin="round"/><polyline points="654.91,372.30 689.92,380.20 759.95,475.00 829.97,514.50 864.98,530.30" fill="none" stroke="#2424ee" stroke-width="1.15" stroke-linejoin="round"/><line x1="742" y1="571.8" x2="758.2" y2="571.8" stroke="#e2515f" stroke-width="1.6"/><line x1="805.2" y1="571.8" x2="821.5" y2="571.8" stroke="#2424ee" stroke-width="1.6"/><line x1="859.7" y1="571.8" x2="875.6" y2="571.8" stroke="#7fcfb8" stroke-width="1.6"/><line x1="915.8" y1="571.8" x2="931.8" y2="571.8" stroke="#8c4a6e" stroke-width="1.6"/><line x1="977.4" y1="571.8" x2="993.4" y2="571.8" stroke="#c79a86" stroke-width="1.6"/></svg>
<div class="t" style="left:600px;width:31.5px;text-align:right;top:530.50px;font-size:5.8px;color:#373d3f">0</div>
<div class="t" style="left:600px;width:31.5px;text-align:right;top:498.90px;font-size:5.8px;color:#373d3f">20</div>
<div class="t" style="left:600px;width:31.5px;text-align:right;top:467.30px;font-size:5.8px;color:#373d3f">40</div>
<div class="t" style="left:600px;width:31.5px;text-align:right;top:435.70px;font-size:5.8px;color:#373d3f">60</div>
<div class="t" style="left:600px;width:31.5px;text-align:right;top:404.10px;font-size:5.8px;color:#373d3f">80</div>
<div class="t" style="left:600px;width:31.5px;text-align:right;top:372.50px;font-size:5.8px;color:#373d3f">100</div>
<div class="t" style="left:600px;width:31.5px;text-align:right;top:340.90px;font-size:5.8px;color:#373d3f">120</div>
<div class="tc" style="left:616.3px;top:435.5px;font-size:6px;color:#444;transform:translate(-50%,-50%) rotate(-90deg)">Percent Passing</div>
<div class="tc" style="left:654.9064999999999px;top:540.5px;font-size:6.25px;color:#373d3f;transform:translate(-50%,calc(-50% + 1px)) scaleX(0.8475);">2 in.</div>
<div class="tc" style="left:689.9195px;top:540.5px;font-size:6.25px;color:#373d3f;transform:translate(-50%,calc(-50% + 1px)) scaleX(0.8475);">1 1/2 in.</div>
<div class="tc" style="left:724.9325px;top:540.5px;font-size:6.25px;color:#373d3f;transform:translate(-50%,calc(-50% + 1px)) scaleX(0.8475);">1 in.</div>
<div class="tc" style="left:759.9454999999999px;top:540.5px;font-size:6.25px;color:#373d3f;transform:translate(-50%,calc(-50% + 1px)) scaleX(0.8475);">3/4 in.</div>
<div class="tc" style="left:794.9585px;top:540.5px;font-size:6.25px;color:#373d3f;transform:translate(-50%,calc(-50% + 1px)) scaleX(0.8475);">1/2 in.</div>
<div class="tc" style="left:829.9715px;top:540.5px;font-size:6.25px;color:#373d3f;transform:translate(-50%,calc(-50% + 1px)) scaleX(0.8475);">3/8 in.</div>
<div class="tc" style="left:864.9845px;top:540.5px;font-size:6.25px;color:#373d3f;transform:translate(-50%,calc(-50% + 1px)) scaleX(0.8475);">No. 4</div>
<div class="tc" style="left:899.9975px;top:540.5px;font-size:6.25px;color:#373d3f;transform:translate(-50%,calc(-50% + 1px)) scaleX(0.8475);">No. 8</div>
<div class="tc" style="left:935.0105px;top:540.5px;font-size:6.25px;color:#373d3f;transform:translate(-50%,calc(-50% + 1px)) scaleX(0.8475);">No. 16</div>
<div class="tc" style="left:970.0235px;top:540.5px;font-size:6.25px;color:#373d3f;transform:translate(-50%,calc(-50% + 1px)) scaleX(0.8475);">No. 30</div>
<div class="tc" style="left:1005.0364999999999px;top:540.5px;font-size:6.25px;color:#373d3f;transform:translate(-50%,calc(-50% + 1px)) scaleX(0.8475);">No. 35</div>
<div class="tc" style="left:1040.0495px;top:540.5px;font-size:6.25px;color:#373d3f;transform:translate(-50%,calc(-50% + 1px)) scaleX(0.8475);">No. 50</div>
<div class="tc" style="left:1075.0625px;top:540.5px;font-size:6.25px;color:#373d3f;transform:translate(-50%,calc(-50% + 1px)) scaleX(0.8475);">No. 100</div>
<div class="tc" style="left:1110.0755px;top:540.5px;font-size:6.25px;color:#373d3f;transform:translate(-50%,calc(-50% + 1px)) scaleX(0.8475);">No. 200</div>
<div class="tc" style="left:1145.0884999999998px;top:540.5px;font-size:6.25px;color:#373d3f;transform:translate(-50%,calc(-50% + 1px)) scaleX(0.8475);">Pan</div>
<div class="tc" style="left:900px;top:550.3px;font-size:6.05px;color:#9a9a9a;transform:translate(-50%,calc(-50% + 1px)) scaleX(0.9091);">Sieve Size</div>
<div class="t" style="left:760.6px;top:571.5px;font-size:5.41px;color:#444a4c;transform-origin:0 50%;transform:translateY(calc(-50% + 1px)) scaleX(0.9091);">Percent Passing</div>
<div class="t" style="left:823.8px;top:571.5px;font-size:5.41px;color:#444a4c;transform-origin:0 50%;transform:translateY(calc(-50% + 1px)) scaleX(0.9091);">Passing Min</div>
<div class="t" style="left:878px;top:571.5px;font-size:5.41px;color:#444a4c;transform-origin:0 50%;transform:translateY(calc(-50% + 1px)) scaleX(0.9091);">Passing Max</div>
<div class="t" style="left:934.6px;top:571.5px;font-size:5.41px;color:#444a4c;transform-origin:0 50%;transform:translateY(calc(-50% + 1px)) scaleX(0.9091);">Std Min % Pass</div>
<div class="t" style="left:995.9px;top:571.5px;font-size:5.41px;color:#444a4c;transform-origin:0 50%;transform:translateY(calc(-50% + 1px)) scaleX(0.9091);">Std Max % Pass</div>
<svg style="left:0;top:0" width="1196" height="665" viewBox="0 0 1196 665"><polygon points="687.3,251.4 705.2,242.9 724.3,282 733,278.2 729.1,315.5 698.1,294.8 706.2,290.9" fill="#88d4a2"/></svg>
<div class="abs" style="left:596.1px;top:306px;width:583.9px;height:293.75px;border:4px solid #0aab4b;border-radius:1px"></div>
<svg style="left:0;top:0" width="1196" height="665" viewBox="0 0 1196 665"><polygon points="991.2,37.2 982.9,55.2 1022,74.3 1018.3,82.8 1055.8,78.3 1035.3,47.9 1031,56" fill="#88d4a2"/></svg>
<div class="abs" style="left:28.5px;top:647.5px;width:1158.7px;height:17.5px;background:#161616"></div>
<div class="tc b" style="left:608.2px;top:656.6px;font-size:5.14px;color:#fff;transform:translate(-50%,calc(-50% + 1px)) scaleX(0.9091);">Copyright © 2010 - 2025 Quadrel LLC. All rights reserved. Q202507211030</div>
<div class="abs" style="left:1144px;top:634.2px;width:36.6px;height:23.7px;background:#62abfd;border-radius:11.9px"></div>
<div class="tc b" style="left:1153.5px;top:645.6px;font-size:7.48px;color:#fff;transform:translate(-50%,calc(-50% + 1px)) scaleX(0.9091);">?</div>
<div class="tc b" style="left:1168.3px;top:644.9px;font-size:6.6px;color:#fff;transform:translate(-50%,calc(-50% + 1px)) scaleX(0.9091);">Help</div>
<div class="abs" style="left:1188px;top:0;width:8px;height:665px;background:#f1f1f8"></div>
<div class="abs" style="left:1189.2px;top:52px;width:5.7px;height:552.2px;background:#6363a9;border-radius:2.85px"></div>
<svg style="left:1189.3px;top:4.2px" width="5.8" height="4.7" viewBox="0 0 5.4 4"><path d="M2.7 0L5.4 4H0z" fill="#4b4ba5"/></svg>
<svg style="left:1189.3px;top:654.8px" width="5.6" height="4.4" viewBox="0 0 5.4 4"><path d="M2.7 4L5.4 0H0z" fill="#4b4ba5"/></svg>
<div class="sidebar"></div>
<div class="abs" style="left:0;top:0;width:1px;height:665px;background:#d9d5d8"></div>
<svg style="left:4.600px;top:4.850px" width="20" height="18" viewBox="-10 -9 20 18"><g transform="rotate(-39)"><path fill="#f59d45" fill-rule="evenodd" d="M-9.600 0a9.600 3.650 0 1 0 19.200 0a9.600 3.650 0 1 0 -19.200 0zM-7.300 -.35a7.700 2.300 0 1 0 15.400 0a7.700 2.300 0 1 0 -15.400 0z"/></g></svg>
<div class="abs" style="left:20.900px;top:27.700px;width:16.200px;height:16.200px;border-radius:50%;background:#fff;box-shadow:0 0 2px rgba(0,0,0,.180)"></div>
<svg style="left:26.700px;top:31.800px" width="4.600" height="8" viewBox="0 0 4.600 8"><path d="M0.700 0.600L3.900 4L0.700 7.400" fill="none" stroke="#f7a656" stroke-width="1" stroke-linecap="round" stroke-linejoin="round"/></svg>
<div class="abs" style="left:1px;top:101.300px;width:27.500px;height:19.200px;background:linear-gradient(90deg,#8a6c86,#5a5399 45%,#43429a 75%,#3d4196)"></div>
<div class="abs" style="left:0;top:104.300px;width:2.800px;height:13.500px;background:#f59d45;border-radius:0 3px 3px 0/0 6px 6px 0"></div>
<svg style="left:7.4px;top:43.1px" width="9.800" height="9.800" viewBox="0 0 10 10" fill="none" stroke="#c3c3e6" stroke-width=".75" stroke-linecap="round" stroke-linejoin="round"><path d="M1 4.6L5 1l4 3.6v3.6a.8.8 0 0 1-.8.8H1.8a.8.8 0 0 1-.8-.8z"/><path d="M3.9 9V6.6a1.1 1.1 0 0 1 2.2 0V9"/></svg>
<svg style="left:7.4px;top:64.2px" width="9.800" height="9.800" viewBox="0 0 10 10" fill="none" stroke="#c3c3e6" stroke-width=".75" stroke-linecap="round" stroke-linejoin="round"><path d="M1.9 1.8a.8.8 0 0 1 .8-.8H6l2.1 2.1v5.1a.8.8 0 0 1-.8.8H2.7a.8.8 0 0 1-.8-.8z"/><path d="M6 1v2.1h2.1"/><path d="M4.1 7.6V5h1.1a.8.8 0 0 1 0 1.6H4.1"/></svg>
<svg style="left:7.4px;top:84.9px" width="9.800" height="9.800" viewBox="0 0 10 10" fill="none" stroke="#c3c3e6" stroke-width=".75" stroke-linecap="round" stroke-linejoin="round"><path d="M5 .8l3.7 2.1v4.2L5 9.2 1.3 7.1V2.900z"/><path d="M1.3 2.900L5 5l3.700-2.100M5 5v4.200"/><path d="M2.2 4.600l2 1.100M2.2 5.900l2 1.100M2.200 7.100l2 1.100M7.800 4.600l-2 1.100M7.800 5.900l-2 1.100M7.800 7.100l-2 1.100" stroke-width=".45"/></svg>
<svg style="left:18.500px;top:88.6px" width="4.400" height="2.800" viewBox="0 0 4.400 2.800"><path d="M0.400 0.400L2.200 2.200L4 0.400" fill="none" stroke="#d5d5f0" stroke-width="0.750" stroke-linecap="round" stroke-linejoin="round"/></svg>
<svg style="left:7.4px;top:105.6px" width="9.800" height="9.800" viewBox="0 0 10 10" fill="none" stroke="#fff" stroke-width=".75" stroke-linecap="round" stroke-linejoin="round"><path d="M5 .8l3.700 2.100v4.200L5 9.200 1.300 7.100V2.900z" fill="#fff"/><path d="M2.100 3.400L5 5l2.900-1.600M5 5v3.300" stroke="#5a5aa8" stroke-width=".5"/><path d="M2.200 5.200l2.100 1.200M2.200 6.500l2.100 1.200M7.800 5.200l-2.100 1.200M7.800 6.500l-2.100 1.200" stroke="#5a5aa8" stroke-width=".45"/></svg>
<svg style="left:7.9px;top:127.3px" width="9.800" height="9.800" viewBox="0 0 10 10" fill="none" stroke="#c3c3e6" stroke-width=".75" stroke-linecap="round" stroke-linejoin="round"><path d="M4 1.100H2.700a1.500 1.500 0 0 0-1.500 1.500v4.800a1.500 1.500 0 0 0 1.500 1.500H4M6 8.900h1.300a1.500 1.500 0 0 0 1.500-1.500V2.600a1.500 1.500 0 0 0-1.500-1.500H6"/><path d="M3.300 3.600a2 2 0 0 1 3.200-.6M6.700 6.400a2 2 0 0 1-3.200.6" stroke-width=".6"/><circle cx="6.700" cy="3.300" r=".5"/><circle cx="3.300" cy="6.700" r=".5"/></svg>
<svg style="left:7.4px;top:146.4px" width="9.800" height="9.800" viewBox="0 0 10 10" fill="none" stroke="#c3c3e6" stroke-width=".75" stroke-linecap="round" stroke-linejoin="round"><circle cx="4.200" cy="1.900" r="1"/><circle cx="1.900" cy="7.700" r="1"/><circle cx="8" cy="6.500" r="1"/><path d="M4.300 2.900l.3 2.100M4.600 5L2.500 6.900M4.600 5l2.500 1.100"/><circle cx="4.600" cy="5" r=".6"/></svg>
<svg style="left:18.500px;top:150.7px" width="4.400" height="2.800" viewBox="0 0 4.400 2.800"><path d="M0.400 0.400L2.200 2.200L4 0.400" fill="none" stroke="#d5d5f0" stroke-width="0.750" stroke-linecap="round" stroke-linejoin="round"/></svg>
<svg style="left:7.4px;top:167.2px" width="9.800" height="9.800" viewBox="0 0 10 10" fill="none" stroke="#c3c3e6" stroke-width=".75" stroke-linecap="round" stroke-linejoin="round"><path d="M2 8.600V3.500L4.200 1.300h3a.8.8 0 0 1 .8.800V4"/><path d="M2 3.500h2.200V1.300"/><path d="M3.600 7.300a2.300 2.300 0 0 1 4.600 0"/><path d="M3.600 7.200v1.200M8.200 7.200v1.200M2 8.600h2" /><circle cx="5.900" cy="6.400" r=".5"/></svg>
<svg style="left:7.4px;top:188.4px" width="9.800" height="9.800" viewBox="0 0 10 10" fill="none" stroke="#c3c3e6" stroke-width=".75" stroke-linecap="round" stroke-linejoin="round"><circle cx="2.100" cy="2.100" r="1.050"/><circle cx="7.900" cy="2.100" r="1.050"/><circle cx="2.100" cy="7.900" r="1.050"/><circle cx="7.900" cy="7.900" r="1.050"/><path d="M3.200 2.100h3.600M3.200 7.900h3.600M2.100 3.200v3.600M7.900 3.200v3.600"/></svg>
<svg style="left:7.4px;top:209.1px" width="9.800" height="9.800" viewBox="0 0 10 10" fill="none" stroke="#c3c3e6" stroke-width=".75" stroke-linecap="round" stroke-linejoin="round"><path d="M1.200 7.700V2.400a.8.8 0 0 1 .8-.8h2l1 1.100h2.600a.8.8 0 0 1 .8.800v.7"/><path d="M1.200 7.900l1.300-3.200a.8.8 0 0 1 .7-.5h5.300a.5.5 0 0 1 .5.700l-1 2.900a.8.8 0 0 1-.8.600H1.900a.7.700 0 0 1-.7-.5z"/></svg>
<svg style="left:7.4px;top:229.8px" width="9.800" height="9.800" viewBox="0 0 10 10" fill="none" stroke="#c3c3e6" stroke-width=".75" stroke-linecap="round" stroke-linejoin="round"><rect x="1.700" y="1.200" width="6.600" height="7.700" rx="1.100"/><path d="M1.700 3.400h6.600M3.200 5.100h3.600M3.200 6.900h3.600"/><path d="M3.300 .7v1M6.700 .7v1" stroke-width=".6"/></svg>
<svg style="left:18.500px;top:233.5px" width="4.400" height="2.800" viewBox="0 0 4.400 2.800"><path d="M0.400 0.400L2.200 2.200L4 0.400" fill="none" stroke="#d5d5f0" stroke-width="0.750" stroke-linecap="round" stroke-linejoin="round"/></svg>
<svg style="left:7.4px;top:249.8px" width="9.800" height="9.800" viewBox="0 0 10 10" fill="none" stroke="#c3c3e6" stroke-width=".75" stroke-linecap="round" stroke-linejoin="round"><path d="M2.700 3.100h4.500v5a1 1 0 0 1-1 1H3.700a1 1 0 0 1-1-1z"/><path d="M5.600 3.100l.6-1.400L8.200.9"/></svg>
<svg style="left:7.4px;top:271.2px" width="9.800" height="9.800" viewBox="0 0 10 10" fill="none" stroke="#c3c3e6" stroke-width=".75" stroke-linecap="round" stroke-linejoin="round"><path d="M2.300 7.300V5.100a2.700 2.700 0 0 1 5.400 0v2.200"/><path d="M1.100 7.400h7.800M2.600 8.900h4.800"/><path d="M5 3.500v2.600M4 5.200l1 1 1-1" stroke-width=".6"/></svg>
<svg style="left:7.4px;top:291.9px" width="9.800" height="9.800" viewBox="0 0 10 10" fill="none" stroke="#c3c3e6" stroke-width=".75" stroke-linecap="round" stroke-linejoin="round"><path d="M1.400 1v7.700H9"/><path d="M3.300 8V4.700M5 8V3.200M6.700 8V5.400M8.200 8V4.200" stroke-width=".9"/></svg>
<svg style="left:7.4px;top:311.6px" width="9.800" height="9.800" viewBox="0 0 10 10" fill="none" stroke="#c3c3e6" stroke-width=".75" stroke-linecap="round" stroke-linejoin="round"><path d="M2 9V5.800M4 9V4.800M6 9V5.800M8 9V3.900" stroke-width="1.150"/><path d="M1.300 4.300l2.600-1.700 1.700 1.100L8.700 1M7.300.9h1.500v1.400" stroke-width=".6"/></svg>
<svg style="left:8.4px;top:333.3px" width="9.800" height="9.800" viewBox="0 0 10 10" fill="none" stroke="#c3c3e6" stroke-width=".75" stroke-linecap="round" stroke-linejoin="round"><path d="M3 1.900h5a.8.8 0 0 1 .8.800v4.500a.8.800 0 0 1-.8.800H3.800a.800.800 0 0 1-.8-.8z"/><path d="M3 3.400H2a.8.8 0 0 0-.8.800v4a.8.800 0 0 0 .8.800h4a.8.800 0 0 0 .8-.8V8"/><path d="M4.500 3.900h2.800M4.500 5.500h2" stroke-width=".6"/></svg>
<svg style="left:18.500px;top:337.0px" width="4.400" height="2.800" viewBox="0 0 4.400 2.800"><path d="M0.400 0.400L2.200 2.200L4 0.400" fill="none" stroke="#d5d5f0" stroke-width="0.750" stroke-linecap="round" stroke-linejoin="round"/></svg>
<svg style="left:7.4px;top:354.0px" width="9.800" height="9.800" viewBox="0 0 10 10" fill="none" stroke="#c3c3e6" stroke-width=".75" stroke-linecap="round" stroke-linejoin="round"><path d="M3.600 2.600h4.600a.7.700 0 0 1 .7.700v3a.700.700 0 0 1-.7.700H4.700L2 8.500l.6-2.200-1.300-1.500z"/><path d="M8.900 2.200L7.300 3.800" stroke-width=".6"/></svg>
<svg style="left:7.4px;top:374.7px" width="9.800" height="9.800" viewBox="0 0 10 10" fill="none" stroke="#c3c3e6" stroke-width=".75" stroke-linecap="round" stroke-linejoin="round"><path d="M1.900 4.100h4.800V9H1.900zM4.300 4.100V9"/><circle cx="7.400" cy="2.300" r="1.400"/><path d="M7.400 3.700v1.500" stroke-width=".6"/><path d="M1.900 4.100l.7-1.700h2.700" stroke-width=".6"/></svg>
<svg style="left:7.4px;top:395.4px" width="9.800" height="9.800" viewBox="0 0 10 10" fill="none" stroke="#c3c3e6" stroke-width=".75" stroke-linecap="round" stroke-linejoin="round"><circle cx="3.400" cy="2.300" r="1.250"/><path d="M3.400 3.600v3.500h4.200a1.700 1.700 0 1 0-1.700-1.700"/><circle cx="2.900" cy="8.200" r=".9"/></svg>
<svg style="left:7.4px;top:416.1px" width="9.800" height="9.800" viewBox="0 0 10 10" fill="none" stroke="#c3c3e6" stroke-width=".75" stroke-linecap="round" stroke-linejoin="round"><path d="M3.700 1v8M6.300 1v8M1 3.700h8M1 6.300h8" stroke-width=".8"/><path d="M4.600 4.600h.8v.8h-.8z" stroke-width=".4"/></svg>
<svg style="left:7.4px;top:436.8px" width="9.800" height="9.800" viewBox="0 0 10 10" fill="none" stroke="#c3c3e6" stroke-width=".75" stroke-linecap="round" stroke-linejoin="round"><path d="M3.700 1.100h2.600l-.5 1.700H4.200z"/><path d="M4.200 2.800C2.200 4 1.500 6 1.800 7.500a1.500 1.500 0 0 0 1.500 1.400h3.400a1.500 1.500 0 0 0 1.500-1.400C8.500 6 7.800 4 5.800 2.800"/><path d="M5 4.600a1.200 1.200 0 1 0 0 2.400a1 1 0 1 1 0 2" stroke-width=".55"/></svg>
<svg style="left:7.4px;top:457.5px" width="9.800" height="9.800" viewBox="0 0 10 10" fill="none" stroke="#c3c3e6" stroke-width=".75" stroke-linecap="round" stroke-linejoin="round"><path d="M5.400 1.900H3a1.500 1.500 0 0 0-1.500 1.500v3.200A1.500 1.500 0 0 0 3 8.100h2.400M5.400 1.400v7.200"/><path d="M4.500 5H9M7.400 3.300L9 5 7.400 6.700"/></svg>
</body></html>
